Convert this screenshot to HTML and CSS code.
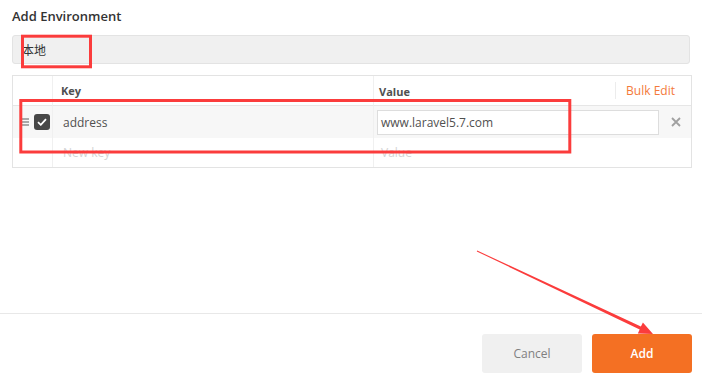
FILE: index.html
```html
<!DOCTYPE html>
<html lang="en">
<head>
    <meta charset="UTF-8">
    <title>Add Environment</title>
    <link rel="stylesheet" href="styles.css">
</head>
<body>

<div class="modal">
    <div class="modal-body">
        <h1 class="title">Add Environment</h1>
        <div class="env-name">本地</div>

        <div class="kv-table">
            <div class="cell head"></div>
            <div class="cell head">Key</div>
            <div class="cell head value-head">
                <span class="value-label">Value</span>
                <a href="#" class="bulk-edit">Bulk Edit</a>
            </div>

            <div class="cell row handle-cell">
                <span class="drag"><i></i><i></i><i></i></span>
                <span class="checkbox">
                    <svg width="10" height="8" viewBox="0 0 10 8"><path d="M1 4.2 L3.8 6.8 L9 1.2" fill="none" stroke="#fff" stroke-width="1.8"/></svg>
                </span>
            </div>
            <div class="cell row key">address</div>
            <div class="cell row value-cell">
                <div class="value-input">www.laravel5.7.com</div>
                <span class="remove">
                    <svg width="10" height="10" viewBox="0 0 10 10"><path d="M1 1 L9 9 M9 1 L1 9" stroke="#a0a0a0" stroke-width="1.8"/></svg>
                </span>
            </div>

            <div class="cell new"></div>
            <div class="cell new key placeholder">New key</div>
            <div class="cell new value-new placeholder">Value</div>
        </div>
    </div>

    <div class="modal-footer">
        <button class="btn btn-cancel">Cancel</button>
        <button class="btn btn-add">Add</button>
    </div>
</div>

<!-- screenshot annotations -->
<svg class="marks" width="702" height="378" viewBox="0 0 702 378">
    <rect x="22.5" y="36.2" width="68" height="30.6" fill="none" stroke="#fb3c3c" stroke-width="3"/>
    <rect x="20.8" y="100.5" width="549" height="51.5" fill="none" stroke="#fb3c3c" stroke-width="3"/>
    <polygon fill="#fb3c3c" points="477.2,250.55 640.9,326.6 642.9,322.6 653,334 637.8,333.4 639.7,329.4 476.8,251.45"/>
</svg>

</body>
</html>
```

FILE: styles.css
```css
* {
    margin: 0;
    padding: 0;
    box-sizing: border-box;
}

body {
    font-family: "Open Sans", "Noto Sans CJK SC", sans-serif;
    font-size: 12px;
    color: #333;
    background: #fff;
    height: 100vh;
    overflow: hidden;
}

.modal {
    height: 100%;
    display: flex;
    flex-direction: column;
}

.modal-body {
    flex: 1;
    padding: 7px 10px 0 12px;
}

.title {
    font-size: 13px;
    font-weight: 600;
    line-height: 18px;
    color: #333;
}

.env-name {
    margin-top: 10px;
    height: 29px;
    line-height: 27px;
    padding-left: 9px;
    margin-right: 2px;
    background: #f0f0f0;
    border: 1px solid #e3e3e3;
    border-radius: 3px;
    font-family: "Noto Sans CJK SC", sans-serif;
    font-size: 12px;
    color: #333;
}

/* key / value table */
.kv-table {
    margin-top: 11px;
    display: grid;
    grid-template-columns: 40px 321px 1fr;
    grid-template-rows: 30px 32px 29px;
    border: 1px solid #e3e3e3;
}

.cell {
    display: flex;
    align-items: center;
    border-right: 1px solid #f0f0f0;
}

.cell:nth-child(3n) {
    border-right: none;
}

.head {
    border-bottom: 1px solid #e6e6e6;
    font-size: 11px;
    font-weight: 700;
    color: #505050;
    padding-left: 8px;
}

.head:first-child {
    padding-left: 0;
}

.value-head {
    padding-left: 5px;
    padding-top: 2px;
}

.value-label {
    flex: 1;
}

.bulk-edit {
    align-self: stretch;
    display: flex;
    align-items: center;
    padding: 0 16px 0 10px;
    margin: 4px 0 6px;
    border-left: 1px solid #ececec;
    color: #f47a3a;
    font-weight: 400;
    font-size: 12px;
    text-decoration: none;
}

.row {
    background: #f7f7f7;
}

.handle-cell {
    padding-left: 9px;
    gap: 5px;
}

.drag {
    display: flex;
    flex-direction: column;
    gap: 1.5px;
    width: 7px;
}

.drag i {
    display: block;
    height: 1.5px;
    background: #a8a8a8;
}

.checkbox {
    width: 16px;
    height: 16px;
    border-radius: 3px;
    background: #474747;
    display: flex;
    align-items: center;
    justify-content: center;
}

.key {
    padding-left: 10px;
    color: #505050;
}

.value-cell {
    padding-left: 3px;
}

.value-input {
    width: 282px;
    height: 25px;
    line-height: 23px;
    padding-left: 3px;
    background: #fff;
    border: 1px solid #ddd;
    color: #505050;
}

.remove {
    flex: 1;
    display: flex;
    justify-content: center;
    padding-left: 2px;
}

.value-new {
    padding-left: 7px;
}

.placeholder {
    color: #d4d4d4;
}

/* footer */
.modal-footer {
    border-top: 1px solid #e8e8e8;
    padding: 20px 10px 5px;
    display: flex;
    justify-content: flex-end;
    gap: 10px;
}

.btn {
    width: 100px;
    height: 39px;
    border: none;
    border-radius: 3px;
    font-family: "Open Sans", sans-serif;
    font-size: 12px;
    cursor: pointer;
}

.btn-cancel {
    background: #f0f0f0;
    color: #808080;
}

.btn-add {
    background: #f47023;
    color: #fff;
    font-weight: 600;
}

.marks {
    position: absolute;
    top: 0;
    left: 0;
    pointer-events: none;
}
```
